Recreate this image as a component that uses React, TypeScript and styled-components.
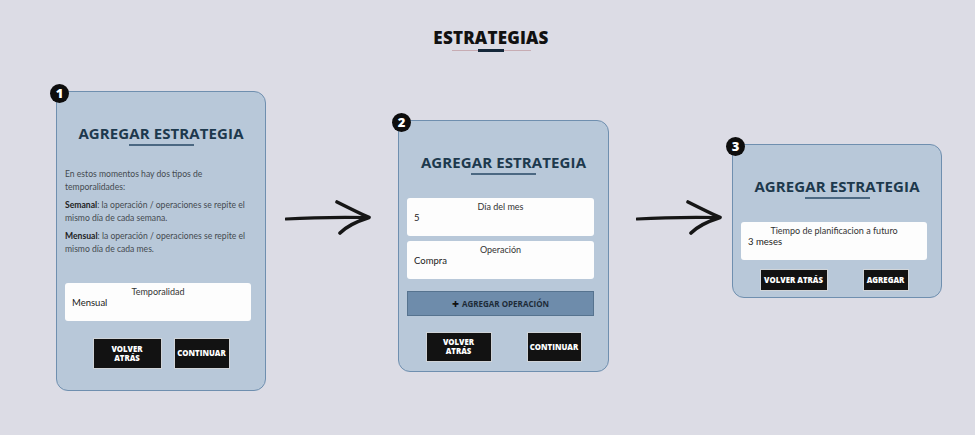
import React from "react";
import styled, { createGlobalStyle } from "styled-components";

const Global = createGlobalStyle`
  html, body { margin: 0; padding: 0; background: #dcdce5; }
  body { font-family: "Lato", "Liberation Sans", sans-serif; width: 975px; height: 435px; overflow: hidden; }
  * { box-sizing: border-box; }
`;

const Page = styled.div`
  display: flex;
  flex-direction: column;
  width: 975px;
  height: 435px;
`;

const TitleBlock = styled.div`
  display: flex;
  flex-direction: column;
  align-items: center;
  padding-top: 28px;
  padding-left: 7px;
`;

const Title = styled.h1`
  margin: 0;
  font-family: "Open Sans", sans-serif;
  font-weight: 800;
  font-size: 17px;
  line-height: 20px;
  color: #111;
  letter-spacing: 0.2px;
`;

const TitleRule = styled.div`
  margin-top: 2px;
  width: 79px;
  height: 1px;
  background: #c7acb3;
  display: flex;
  justify-content: center;
  align-items: center;
`;

const TitleRuleMark = styled.div`
  width: 26px;
  height: 3px;
  background: #15283a;
`;

const Row = styled.div`
  display: flex;
  align-items: flex-start;
  padding-left: 56px;
  margin-top: 40px;
`;

const Card = styled.div<{ $top: number; $w: number; $h: number }>`
  position: relative;
  margin-top: ${(p) => p.$top}px;
  width: ${(p) => p.$w}px;
  height: ${(p) => p.$h}px;
  background: #b8c8d9;
  border: 1.5px solid #6f8faf;
  border-radius: 12px;
  padding: 0 14px 0 8px;
  display: flex;
  flex-direction: column;
`;

const Badge = styled.div`
  position: absolute;
  left: -7px;
  top: -8px;
  width: 19px;
  height: 19px;
  border-radius: 50%;
  background: #0d0d0d;
  color: #fff;
  font-family: "Open Sans", sans-serif;
  font-weight: 800;
  font-size: 13px;
  line-height: 19px;
  text-align: center;
`;

const CardHead = styled.div`
  display: flex;
  flex-direction: column;
  align-items: center;
  padding-top: 32px;
  padding-left: 6px;
`;

const CardTitle = styled.h2`
  margin: 0;
  font-family: "Open Sans", sans-serif;
  font-weight: 700;
  font-size: 15px;
  line-height: 18px;
  color: #1d394d;
  letter-spacing: 0.1px;
  white-space: nowrap;
`;

const CardRule = styled.div`
  margin-top: 2px;
  width: 65px;
  height: 2px;
  background: #4b6882;
`;

const Body = styled.div`
  margin-top: 22px;
  font-size: 8.6px;
  line-height: 12.5px;
  color: #444a50;
  display: flex;
  flex-direction: column;
  gap: 6px;
  padding-right: 0;
`;

const P = styled.p`
  margin: 0;
`;

const B = styled.span`
  color: #222;
  font-weight: 700;
`;

const Field = styled.div<{ $mt: number }>`
  margin-top: ${(p) => p.$mt}px;
  height: 38px;
  background: #fdfdfd;
  border-radius: 3px;
  padding: 3px 7px 0 7px;
  display: flex;
  flex-direction: column;
`;

const FieldLabel = styled.div`
  text-align: center;
  font-size: 9px;
  line-height: 11px;
  color: #333;
`;

const FieldValue = styled.div`
  font-size: 9.5px;
  line-height: 12px;
  color: #222;
`;

const AddBar = styled.div`
  margin-top: 12px;
  height: 25px;
  background: #6e8cab;
  border: 1px solid #56738f;
  display: flex;
  align-items: center;
  justify-content: center;
  gap: 3px;
  font-family: "Open Sans", sans-serif;
  font-weight: 700;
  font-size: 8px;
  color: #1d2b38;
`;

const Plus = styled.span`
  font-size: 12px;
  line-height: 12px;
  font-weight: 800;
  color: #111;
`;

const Buttons = styled.div<{ $mt: number; $gap: number; $shift?: number }>`
  margin-top: ${(p) => p.$mt}px;
  display: flex;
  justify-content: center;
  gap: ${(p) => p.$gap}px;
  padding-left: ${(p) => p.$shift ?? 6}px;
`;

const Btn = styled.button<{ $w: number; $h: number }>`
  width: ${(p) => p.$w}px;
  height: ${(p) => p.$h}px;
  background: #121212;
  color: #fff;
  border: 1px solid #d0d4d8;
  padding: 0;
  font-family: "Open Sans", sans-serif;
  font-weight: 800;
  font-size: 7.8px;
  line-height: 9px;
  text-align: center;
`;

const ArrowSlot = styled.div<{ $ml: number; $mr: number }>`
  margin: 107px ${(p) => p.$mr}px 0 ${(p) => p.$ml}px;
  width: 86px;
  height: 38px;
  flex-shrink: 0;
`;

function Arrow() {
  return (
    <svg width="86" height="38" viewBox="0 0 86 38">
      <path
        d="M1 21 C 25 19.5, 55 19, 83 19.5"
        fill="none"
        stroke="#161616"
        strokeWidth="3.2"
        strokeLinecap="round"
      />
      <path
        d="M52 4 C 62 9, 74 15, 84 19.5 C 73 23, 62 28, 55 35"
        fill="none"
        stroke="#161616"
        strokeWidth="3.6"
        strokeLinecap="round"
        strokeLinejoin="round"
      />
    </svg>
  );
}

export default function App() {
  return (
    <Page>
      <Global />
      <TitleBlock>
        <Title>ESTRATEGIAS</Title>
        <TitleRule>
          <TitleRuleMark />
        </TitleRule>
      </TitleBlock>
      <Row>
        <Card $top={0} $w={210} $h={300}>
          <Badge>1</Badge>
          <CardHead>
            <CardTitle>AGREGAR ESTRATEGIA</CardTitle>
            <CardRule />
          </CardHead>
          <Body>
            <P>
              En estos momentos hay dos tipos de
              <br />
              temporalidades:
            </P>
            <P>
              <B>Semanal</B>: la operación / operaciones se repite el
              <br />
              mismo día de cada semana.
            </P>
            <P>
              <B>Mensual</B>: la operación / operaciones se repite el
              <br />
              mismo día de cada mes.
            </P>
          </Body>
          <Field $mt={28}>
            <FieldLabel>Temporalidad</FieldLabel>
            <FieldValue>Mensual</FieldValue>
          </Field>
          <Buttons $mt={17} $gap={12}>
            <Btn $w={69} $h={31}>
              VOLVER
              <br />
              ATRÁS
            </Btn>
            <Btn $w={56} $h={31}>CONTINUAR</Btn>
          </Buttons>
        </Card>
        <ArrowSlot $ml={19} $mr={27}>
          <Arrow />
        </ArrowSlot>
        <Card $top={29} $w={211} $h={252}>
          <Badge>2</Badge>
          <CardHead>
            <CardTitle>AGREGAR ESTRATEGIA</CardTitle>
            <CardRule />
          </CardHead>
          <Field $mt={23}>
            <FieldLabel>Día del mes</FieldLabel>
            <FieldValue>5</FieldValue>
          </Field>
          <Field $mt={5}>
            <FieldLabel>Operación</FieldLabel>
            <FieldValue>Compra</FieldValue>
          </Field>
          <AddBar>
            <Plus>+</Plus>AGREGAR OPERACIÓN
          </AddBar>
          <Buttons $mt={16} $gap={35}>
            <Btn $w={66} $h={30}>
              VOLVER
              <br />
              ATRÁS
            </Btn>
            <Btn $w={55} $h={30}>CONTINUAR</Btn>
          </Buttons>
        </Card>
        <ArrowSlot $ml={27} $mr={10}>
          <Arrow />
        </ArrowSlot>
        <Card $top={53} $w={210} $h={154}>
          <Badge>3</Badge>
          <CardHead>
            <CardTitle>AGREGAR ESTRATEGIA</CardTitle>
            <CardRule />
          </CardHead>
          <Field $mt={23}>
            <FieldLabel>Tiempo de planificacion a futuro</FieldLabel>
            <FieldValue>3 meses</FieldValue>
          </Field>
          <Buttons $mt={9} $gap={35} $shift={0}>
            <Btn $w={68} $h={22}>VOLVER ATRÁS</Btn>
            <Btn $w={46} $h={22}>AGREGAR</Btn>
          </Buttons>
        </Card>
      </Row>
    </Page>
  );
}
